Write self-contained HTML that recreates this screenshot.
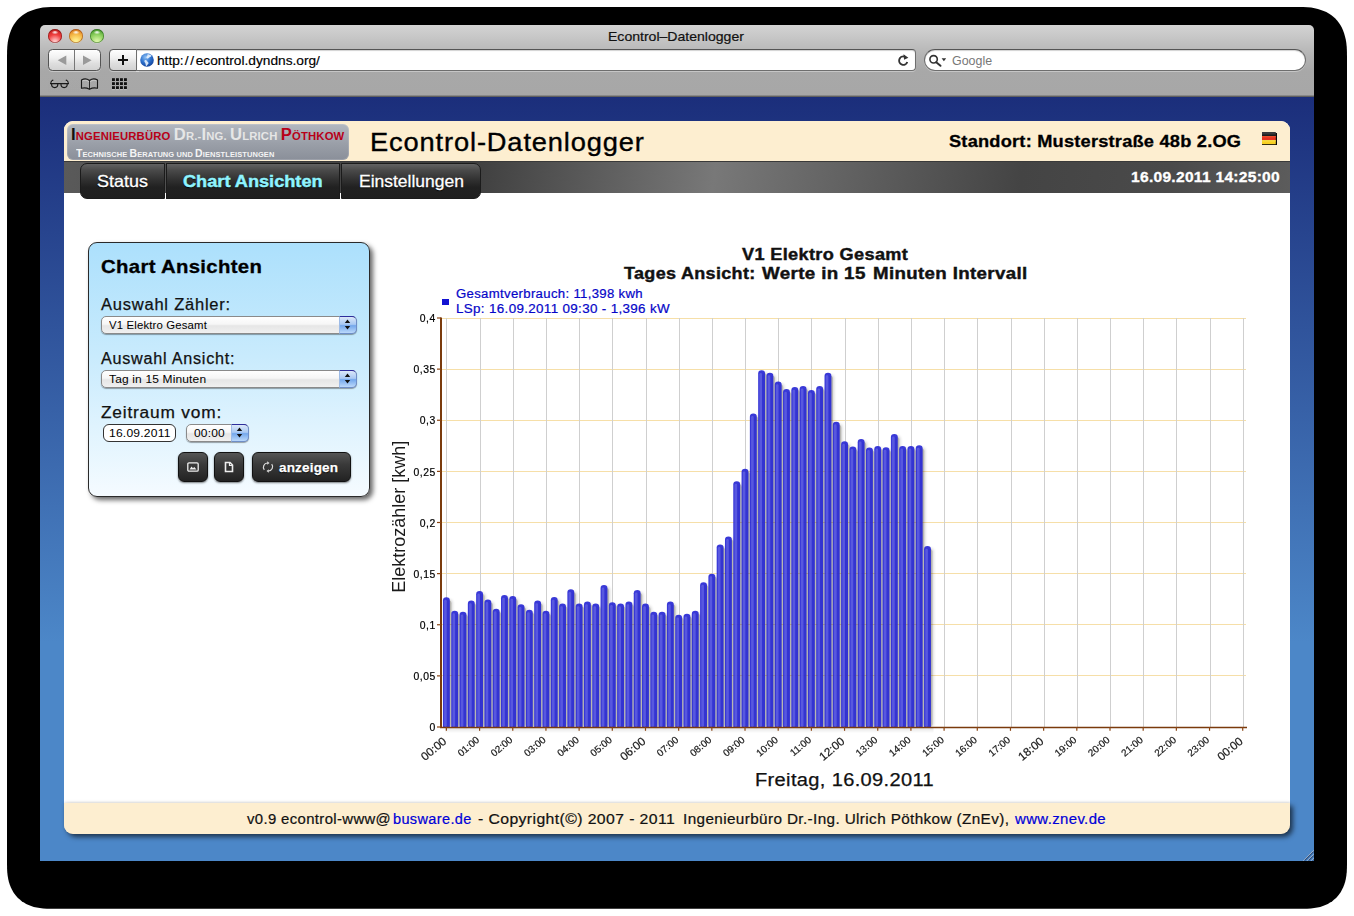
<!DOCTYPE html>
<html lang="de">
<head>
<meta charset="utf-8">
<title>Econtrol-Datenlogger</title>
<style>
*{box-sizing:border-box;margin:0;padding:0}
html,body{width:1354px;height:916px;overflow:hidden;background:#fff}
body{position:relative;font-family:"Liberation Sans",sans-serif;color:#000}
.abs{position:absolute}
.t{position:absolute;white-space:nowrap;line-height:1}
#shadow{left:7px;top:6px;width:1340px;height:903px;background:#000;border-radius:47px}
#win{left:40px;top:25px;width:1274px;height:836px;overflow:hidden;border-radius:5px 5px 0 0}
#chrome{left:0;top:0;width:1274px;height:72px;background:linear-gradient(#d3d3d3 0px,#c9c9c9 10px,#b4b4b4 30px,#a8a8a8 46px,#a7a7a7 70px,#6a6a6a 71px,#555 72px)}
#page{left:0;top:72px;width:1274px;height:764px;background:linear-gradient(#1b2e7b 0px,#4c87c8 545px,#4c87c8 100%)}
.tl{position:absolute;top:29px;width:14px;height:14px;border-radius:50%}
.tl:after{content:"";position:absolute;left:4.200px;top:1.600px;width:5.600px;height:3.200px;border-radius:50%;background:radial-gradient(ellipse at 50% 40%,rgba(255,255,255,.95) 0%,rgba(255,255,255,.5) 45%,rgba(255,255,255,0) 100%)}
.btn{position:absolute;top:49px;height:22px;border:1px solid #545454;border-radius:4.5px;background:linear-gradient(#fefefe,#f1f1f1 38%,#dedede 68%,#d2d2d2);box-shadow:0 1px 0 rgba(255,255,255,.35)}
.field{position:absolute;top:49px;height:22px;background:#fff;border:1px solid #6e6e6e;border-top-color:#555;box-shadow:0 1px 0 rgba(255,255,255,.35), inset 0 1px 1px rgba(0,0,0,.18)}
</style>
</head>
<body>
<svg class="abs" style="left:0;top:0" width="1354" height="916"><path d="M7.0 56.9 L7.1 50.8 L7.3 46.5 L7.7 42.7 L8.3 39.2 L9.1 36.0 L10.0 33.0 L11.0 30.2 L12.2 27.6 L13.6 25.1 L15.2 22.8 L16.9 20.6 L18.7 18.6 L20.7 16.8 L22.9 15.1 L25.2 13.5 L27.7 12.1 L30.3 10.9 L33.1 9.9 L36.1 9.0 L39.3 8.2 L42.8 7.6 L46.6 7.2 L50.9 7.0 L57.0 6.9 L1297.0 6.9 L1303.1 7.0 L1307.4 7.2 L1311.2 7.6 L1314.7 8.2 L1317.9 9.0 L1320.9 9.9 L1323.7 10.9 L1326.3 12.1 L1328.8 13.5 L1331.1 15.1 L1333.3 16.8 L1335.3 18.6 L1337.1 20.6 L1338.8 22.8 L1340.4 25.1 L1341.8 27.6 L1343.0 30.2 L1344.0 33.0 L1344.9 36.0 L1345.7 39.2 L1346.3 42.7 L1346.7 46.5 L1346.9 50.8 L1347.0 56.9 L1347.0 863.8 L1346.9 868.9 L1346.7 872.6 L1346.3 876.0 L1345.8 879.1 L1345.1 882.0 L1344.2 884.7 L1343.2 887.2 L1342.1 889.6 L1340.8 891.9 L1339.4 894.1 L1337.8 896.0 L1336.1 897.9 L1334.2 899.6 L1332.3 901.2 L1330.1 902.6 L1327.8 903.9 L1325.4 905.0 L1322.9 906.0 L1320.2 906.9 L1317.3 907.6 L1314.2 908.1 L1310.8 908.5 L1307.1 908.7 L1302.0 908.8 L52.0 908.8 L46.9 908.7 L43.2 908.5 L39.8 908.1 L36.7 907.6 L33.8 906.9 L31.1 906.0 L28.6 905.0 L26.2 903.9 L23.9 902.6 L21.7 901.2 L19.8 899.6 L17.9 897.9 L16.2 896.0 L14.6 894.1 L13.2 891.9 L11.9 889.6 L10.8 887.2 L9.8 884.7 L8.9 882.0 L8.2 879.1 L7.7 876.0 L7.3 872.6 L7.1 868.9 L7.0 863.8z" fill="#000"/></svg>
<div id="win" class="abs">
<div id="chrome" class="abs">
<div class="abs" style="left:-40px;top:-25px;width:1354px;height:916px">
  <div class="tl" style="left:48px;background:radial-gradient(circle at 50% 92%,#ffd0d0 0%,#ffb4b4 14%,#ef4040 50%,#d42a2a 72%,#8e1616 100%);box-shadow:inset 0 0 0 .8px rgba(110,15,15,.65),0 .5px 0 rgba(255,255,255,.35)"></div>
  <div class="tl" style="left:69px;background:radial-gradient(circle at 50% 92%,#fff39a 0%,#ffea86 16%,#f6bd4c 50%,#e8952e 72%,#a8461a 100%);box-shadow:inset 0 0 0 .8px rgba(140,60,10,.6),0 .5px 0 rgba(255,255,255,.35)"></div>
  <div class="tl" style="left:90px;background:radial-gradient(circle at 50% 92%,#dcf7aa 0%,#cdf09a 16%,#8fd160 50%,#63b040 72%,#2a6e1a 100%);box-shadow:inset 0 0 0 .8px rgba(30,90,20,.6),0 .5px 0 rgba(255,255,255,.35)"></div>
  <div class="t" id="wtitle" style="-webkit-text-stroke-width:.2px;left:608.4px;transform-origin:0 0;transform:scaleX(1.0807);top:30px;font-size:13px;color:#111">Econtrol–Datenlogger</div>
  <div class="btn" style="left:48px;width:53px"></div>
  <div class="abs" style="left:74px;top:50px;width:1px;height:20px;background:#777"></div>
  <svg class="abs" style="left:48px;top:49px" width="53" height="22"><path d="M18.300 6.500v9.400l-8.600-4.700z" fill="#9a9a9a"/><path d="M35 6.500v9.400l8.600-4.700z" fill="#9a9a9a"/></svg>
  <div class="btn" style="left:109px;width:30px;border-radius:4px 0 0 4px"></div>
  <svg class="abs" style="left:109px;top:49px" width="30" height="22"><path d="M9 11h10M14 6v10" stroke="#111" stroke-width="2" fill="none"/></svg>
  <div class="field" id="urlf" style="left:136px;width:780px;border-radius:0 4px 4px 0"></div>
  <svg class="abs" style="left:140px;top:53px" width="14" height="14" viewBox="0 0 14 14"><defs><radialGradient id="gl" cx=".4" cy=".3" r=".75"><stop offset="0" stop-color="#8fc0f4"/><stop offset=".5" stop-color="#2f74d0"/><stop offset="1" stop-color="#123f96"/></radialGradient></defs><circle cx="7" cy="7" r="6.800" fill="url(#gl)"/><path d="M7.500 1.200c1.800-.2 3.300.6 4.200 1.800c-.8.300-1.200 1.100-2 1.300c-.9.200-1.100 1.200-1.900 1.300c-.9.100-1.600-.6-1.500-1.500c.1-.8 1-.9 1.100-1.700c.1-.5-.1-.9.100-1.200zM4.800 7.200c.9-.3 1.900.2 2.400 1c.5.800 1.500 1 1.300 2c-.2 1-1.200 1.300-1.500 2.200c-.2.500-.6.700-1 .4c-.5-1-.3-2.100-.9-3c-.5-.8-1.300-1.800-.3-2.600z" fill="#e8f2fd" opacity=".9"/></svg>
  <div class="t" id="url" style="-webkit-text-stroke-width:.15px;left:157.4px;transform-origin:0 0;transform:scaleX(1.0542);top:54px;font-size:13px;color:#000">http:<span style="letter-spacing:1.6px;margin-left:1px">//</span>econtrol.dyndns.org/</div>
  <svg class="abs" style="left:48px;top:76px" width="84" height="16" viewBox="48 76 84 16">
    <g fill="none" stroke="#ddd" stroke-width="1.1" opacity=".55" transform="translate(0,1)">
      <path d="M50.6 84.200q0.300-3.200 2.400-3.800M68.500 84.200q-.3-3.200-2.400-3.800"/>
      <path d="M81.500 88.500v-8.200q4-2.500 8 0.500q4-3 8-0.500v8.200"/>
    </g>
    <g fill="none" stroke="#1a1a1a" stroke-width="1.15" stroke-linecap="round">
      <path d="M50.6 83.700q0.300-3 2.300-3.600M68.500 83.700q-.3-3-2.300-3.600"/>
      <path d="M50.800 83.600h17.500" stroke-width="1.4"/>
      <path d="M51.600 84q-.2 3.600 3.100 3.600q3.300 0 3.100-3.600M61 84q-.2 3.600 3.100 3.600q3.300 0 3.100-3.600"/>
      <path d="M81.500 88.300v-8.200q4-2.600 8 .4q4-3 8-.4v8.200q-4-1.300-8 .9q-4-2.200-8-.9z" stroke-linejoin="round"/>
      <path d="M89.500 80.600v8.300" stroke-width=".9"/>
    </g>
    <g fill="#111">
      <rect x="112" y="78.200" width="2.900" height="2.800"/><rect x="116" y="78.200" width="2.900" height="2.800"/><rect x="120" y="78.200" width="2.900" height="2.800"/><rect x="124" y="78.200" width="2.900" height="2.800"/>
      <rect x="112" y="82.200" width="2.900" height="2.800"/><rect x="116" y="82.200" width="2.900" height="2.800"/><rect x="120" y="82.200" width="2.900" height="2.800"/><rect x="124" y="82.200" width="2.900" height="2.800"/>
      <rect x="112" y="86.200" width="2.900" height="2.800"/><rect x="116" y="86.200" width="2.900" height="2.800"/><rect x="120" y="86.200" width="2.900" height="2.800"/><rect x="124" y="86.200" width="2.900" height="2.800"/>
    </g>
    <g fill="#d8d8d8" opacity=".6">
      <rect x="112" y="89.300" width="2.900" height=".8"/><rect x="116" y="89.300" width="2.900" height=".8"/><rect x="120" y="89.300" width="2.900" height=".8"/><rect x="124" y="89.300" width="2.900" height=".8"/>
    </g>
  </svg>
  <div class="field" id="srch" style="left:924px;width:382px;border-radius:11px"></div>
  <svg class="abs" style="left:896px;top:52px" width="52" height="16" viewBox="896 52 52 16">
    <path d="M907.300 62a4.200 4.200 0 1 1 -2.700 -5.400" fill="none" stroke="#333" stroke-width="1.900"/>
    <path d="M903.500 54.300l4.900 3.400l-4.300 2z" fill="#333"/>
    <circle cx="933.600" cy="59.300" r="3.700" fill="none" stroke="#333" stroke-width="1.600"/>
    <path d="M936.200 62.200l4.300 3.600" stroke="#333" stroke-width="2" stroke-linecap="round"/>
    <path d="M941.600 58.200h4.600l-2.300 3z" fill="#333"/>
  </svg>
  <div class="t" id="goog" style="left:952.4px;transform-origin:0 0;transform:scaleX(1.0361);top:54.5px;font-size:12px;color:#777">Google</div>
</div>
</div>
<div id="page" class="abs">
<div class="abs" id="cv" style="left:-40px;top:-97px;width:1354px;height:916px">
<style>
#panel{left:64px;top:121px;width:1226px;height:712.7px;background:#fff;border-radius:9px}
#hdr{left:64px;top:120.8px;width:1226px;height:41px;background:#fdeed0;border-radius:9px 9px 0 0}
#nav{left:64px;top:160.6px;width:1226px;height:32.2px;border-top:1px solid #3a3a3a;background:linear-gradient(98deg,#5a5a5a 0%,#4a4a4a 14%,#3e3e3e 33%,#787878 53%,#444 78%,#4a4a4a 90%,#5c5c5c 100%)}
#ftr{left:64px;top:802.5px;width:1226px;height:31.2px;background:#fdeed0;border-radius:0 0 9px 9px;box-shadow:3px 3px 5px rgba(0,0,0,.6),0 -1px 3px rgba(0,0,0,.10)}
#logo{left:67px;top:124px;width:282px;height:36px;border-radius:6px;background:linear-gradient(#b3b8c0,#9a9fa8 55%,#8a8f99);box-shadow:inset 0 0 0 1px rgba(255,255,255,.15)}
.sc{font-weight:bold;font-size:10.9px;letter-spacing:.15px}
.sc b{font-size:16px;font-weight:bold}
.sc2{font-weight:bold;font-size:7.5px;color:#f4f4f4;letter-spacing:.1px}
.sc2 b{font-size:10.5px}
.tab{position:absolute;top:163px;height:35.6px;border:1px solid #1b1b1b;background:linear-gradient(#626262 0%,#4a4a4a 18%,#303030 48%,#212121 68%,#1f1f1f 100%)}
.tabt{-webkit-text-stroke-width:.3px;top:172.5px;font-size:16.5px;color:#fff;text-shadow:0 1px 1px #000}
</style>
<div id="panel" class="abs"></div>
<div id="hdr" class="abs"></div>
<div id="logo" class="abs"></div>
<div class="t sc" id="lg1" style="left:71.2px;transform-origin:0 0;transform:scaleX(1.0367);top:126.5px;color:#b80018"><b style="color:#111">I</b>NGENIEURBÜRO <span style="color:#e6e6e6"><b>D</b>R.-<b>I</b>NG. <b>U</b>LRICH</span> <b>P</b>ÖTHKOW</div>
<div class="t sc2" id="lg2" style="left:76.0px;transform-origin:0 0;transform:scaleX(0.9957);top:148px"><b>T</b>ECHNISCHE <b>B</b>ERATUNG UND <b>D</b>IENSTLEISTUNGEN</div>
<div class="t" id="ttl" style="-webkit-text-stroke-width:.35px;left:370.0px;transform-origin:0 0;transform:scaleX(1.0818);top:129.6px;font-size:25.2px;letter-spacing:.8px">Econtrol-Datenlogger</div>
<div class="t" id="loc" style="-webkit-text-stroke-width:.3px;left:949.0px;transform-origin:0 0;transform:scaleX(1.0605);top:133.1px;font-size:17.2px;font-weight:bold;letter-spacing:.2px">Standort: Musterstraße 48b 2.OG</div>
<svg class="abs" style="left:1262px;top:131.800px" width="15" height="13.200" viewBox="0 0 15 13.200"><rect x="0" y="1" width="15" height="12.200" fill="#0a0a0a"/><rect x="0" y="0" width="13.800" height="4.100" fill="#3a3a3a"/><rect x="0" y="2.500" width="13.800" height="1.600" fill="#1c1c1c"/><rect x="0" y="4.100" width="13.800" height="4.100" fill="#e4301e"/><rect x="0" y="4.100" width="13.800" height="1.200" fill="#f0502c"/><rect x="0" y="8.200" width="13.800" height="4" fill="#f7cf22"/><rect x="0" y="8.200" width="13.800" height="1.200" fill="#fbe04a"/></svg>
<div id="nav" class="abs"></div>
<div class="t" id="dt" style="-webkit-text-stroke-width:.3px;left:1131.0px;transform-origin:0 0;transform:scaleX(1.0683);top:170px;font-size:14.6px;font-weight:bold;color:#fff;letter-spacing:.25px">16.09.2011 14:25:00</div>
<div class="tab" style="left:80.4px;width:84.6px;border-radius:7px 0 0 7px"></div><div class="t tabt" id="tab1" style="left:97.4px;transform-origin:0 0;transform:scaleX(1.0880);">Status</div>
<div class="tab" style="left:166px;width:174px"></div><div class="t tabt" id="tab2" style="left:183.4px;transform-origin:0 0;transform:scaleX(1.1007);color:#8ff4ff;font-weight:bold;-webkit-text-stroke-width:.45px">Chart Ansichten</div>
<div class="tab" style="left:341px;width:140px;border-radius:0 7px 7px 0"></div><div class="t tabt" id="tab3" style="left:359.0px;transform-origin:0 0;transform:scaleX(1.0588);">Einstellungen</div>
<div id="ftr" class="abs"></div>
<div class="t" id="fta" style="left:247.3px;transform-origin:0 0;transform:scaleX(1.0621);-webkit-text-stroke-width:.2px;top:811.5px;font-size:14px;letter-spacing:.35px;color:#111;">v0.9 econtrol-www@</div>
<div class="t" id="ftb" style="left:392.9px;transform-origin:0 0;transform:scaleX(1.0370);-webkit-text-stroke-width:.2px;top:811.5px;font-size:14px;letter-spacing:.35px;color:#111;color:#0000d8;">busware.de</div>
<div class="t" id="ftc" style="left:477.6px;transform-origin:0 0;transform:scaleX(1.1276);-webkit-text-stroke-width:.2px;top:811.5px;font-size:14px;letter-spacing:.35px;color:#111;">- Copyright(©) 2007 - 2011</div>
<div class="t" id="ftd" style="left:682.7px;transform-origin:0 0;transform:scaleX(1.0914);-webkit-text-stroke-width:.2px;top:811.5px;font-size:14px;letter-spacing:.35px;color:#111;">Ingenieurbüro Dr.-Ing. Ulrich Pöthkow (ZnEv),</div>
<div class="t" id="fte" style="left:1015.0px;transform-origin:0 0;transform:scaleX(1.0669);-webkit-text-stroke-width:.2px;top:811.5px;font-size:14px;letter-spacing:.35px;color:#111;color:#0000d8;">www.znev.de</div>
<svg class="abs" style="left:1302px;top:849px" width="12" height="12" viewBox="0 0 12 12"><g stroke="#b9c9de" stroke-width="1"><path d="M11.500 1.500l-10 10M11.500 5.500l-6 6M11.500 9.500l-2 2"/></g><g stroke="#2f4f7c" stroke-width="1.1"><path d="M11.500 2.600l-8.900 8.900M11.500 6.600l-4.900 4.900M11.500 10.600l-.9.900"/></g></svg>
<style>
#side{left:88px;top:242px;width:282px;height:255px;border:1px solid #2a2a2a;border-radius:9px;background:linear-gradient(#ace0fc 0%,#c9ebfd 45%,#f5fbff 100%);box-shadow:3px 3px 5px rgba(0,0,0,.6)}
.lbl{-webkit-text-stroke-width:.25px;font-size:16px;letter-spacing:.75px;color:#111}
.sel{position:absolute;height:17.8px;border:1px solid #8a8a8a;border-radius:5px;background:linear-gradient(#ffffff 0%,#f6f6f6 45%,#e6e6e6 55%,#f0f0f0 100%);box-shadow:0 1px 1px rgba(0,0,0,.35)}
.selcap{position:absolute;top:-1px;right:-1px;width:18px;height:17.8px;border-radius:0 5px 5px 0;border:1px solid #6f8fc8;border-top-color:#2d2d9c;border-left-color:#9dbbe6;background:linear-gradient(#dbe8f9 0%,#a9c9f3 46%,#74a8ec 54%,#bcd9fb 100%)}
.seltx{font-size:11px;color:#000;letter-spacing:.15px}
.dbtn{position:absolute;top:452px;height:30px;border-radius:6px;border:1px solid #111;background:linear-gradient(#555 0%,#3a3a3a 40%,#222 100%);box-shadow:0 1px 2px rgba(0,0,0,.5)}
</style>
<div id="side" class="abs"></div>
<div class="t" id="sh" style="-webkit-text-stroke-width:.3px;left:101.0px;transform-origin:0 0;transform:scaleX(1.0708);top:257px;font-size:19px;font-weight:bold;letter-spacing:.3px">Chart Ansichten</div>
<div class="t lbl" id="l1" style="left:101.0px;transform-origin:0 0;transform:scaleX(1.0312);top:297px">Auswahl Zähler:</div>
<div class="sel" style="left:101px;top:316.3px;width:256px"><div class="selcap"><svg width="15" height="15" style="position:absolute;left:0;top:0"><path d="M7.5 2.5l2.7 3.6h-5.4zM7.5 12.5l2.7-3.6h-5.4z" fill="#111"/></svg></div></div>
<div class="t lbl" id="l2" style="left:101.0px;transform-origin:0 0;transform:scaleX(1.0101);top:351px">Auswahl Ansicht:</div>
<div class="sel" style="left:101px;top:370.3px;width:256px"><div class="selcap"><svg width="15" height="15" style="position:absolute;left:0;top:0"><path d="M7.5 2.5l2.7 3.6h-5.4zM7.5 12.5l2.7-3.6h-5.4z" fill="#111"/></svg></div></div>
<div class="t lbl" id="l3" style="left:101.0px;transform-origin:0 0;transform:scaleX(1.0804);top:405px">Zeitraum vom:</div>
<div class="abs" style="left:103px;top:424.3px;width:73px;height:17.5px;border:1px solid #333;border-radius:6px;background:#fff"></div>
<div class="t" id="d1" style="left:109.0px;transform-origin:0 0;transform:scaleX(1.0969);top:428px;font-size:11px;letter-spacing:.2px">16.09.2011</div>
<div class="sel" style="left:186px;top:424.3px;width:63px"><div class="selcap"><svg width="15" height="15" style="position:absolute;left:0;top:0"><path d="M7.5 2.5l2.7 3.6h-5.4zM7.5 12.5l2.7-3.6h-5.4z" fill="#111"/></svg></div></div>
<div class="dbtn" style="left:178px;width:30px"></div>
<svg class="abs" style="left:187px;top:462px" width="12" height="10"><rect x="0.800" y="0.800" width="10.400" height="8.400" rx="1.2" fill="none" stroke="#eee" stroke-width="1.300"/><path d="M2.500 7.500l2-3 1.500 1.800 1.200-1.200 2.300 2.400z" fill="#eee"/></svg>
<div class="dbtn" style="left:214px;width:30px"></div>
<svg class="abs" style="left:224px;top:461px" width="10" height="12"><path d="M1.5 1.5h4.5l2.5 2.5v6.500h-7z" fill="none" stroke="#eee" stroke-width="1.6"/><path d="M5.5 1.500v3h3" fill="none" stroke="#eee" stroke-width="1.2"/></svg>
<div class="dbtn" style="left:252px;width:99px"></div>
<svg class="abs" style="left:261px;top:459px" width="14" height="16" viewBox="0 0 14 16"><g fill="none" stroke="#ddd" stroke-width="1.200"><path d="M3.300 10.800a4.200 4.200 0 0 1 3.200-6.800"/><path d="M10.700 5.200a4.200 4.200 0 0 1 -3.200 6.800"/></g><path d="M6.200 2.200l2.300 1.800-2.300 1.800z" fill="#ddd"/><path d="M7.800 10.200l-2.300 1.800 2.300 1.800z" fill="#ddd"/></svg>
<div class="t" id="az" style="-webkit-text-stroke-width:.25px;left:279.0px;transform-origin:0 0;transform:scaleX(0.9971);top:460.5px;font-size:13.5px;font-weight:bold;color:#fff;letter-spacing:.2px;text-shadow:0 1px 1px #000">anzeigen</div>
<div class="t seltx" id="s1" style="left:109.0px;transform-origin:0 0;transform:scaleX(1.0329);top:320px">V1 Elektro Gesamt</div>
<div class="t seltx" id="s2" style="left:109.0px;transform-origin:0 0;transform:scaleX(1.0874);top:374px">Tag in 15 Minuten</div>
<div class="t seltx" id="s3" style="left:194.4px;transform-origin:0 0;transform:scaleX(1.0891);top:428px">00:00</div>
<style>
.yl{-webkit-text-stroke-width:.2px;font-size:10.4px;letter-spacing:.5px;text-align:right;color:#000}
.xl{will-change:transform;text-align:right;transform-origin:100% 0;transform:rotate(-40deg);color:#2a2a2a}
.ct{-webkit-text-stroke-width:.4px;font-size:15.8px;font-weight:bold;letter-spacing:.3px;color:#111}
.lg{-webkit-text-stroke-width:.2px;font-size:12px;color:#0606c8;letter-spacing:.3px}
</style>
<div class="t ct" id="ct1" style="left:742.2px;transform-origin:0 0;transform:scaleX(1.1484);top:246.7px">V1 Elektro Gesamt</div>
<div class="t ct" id="ct2a" style="left:623.9px;transform-origin:0 0;transform:scaleX(1.1375);top:265.9px">Tages Ansicht:</div>
<div class="t ct" id="ct2b" style="left:762.2px;transform-origin:0 0;transform:scaleX(1.1879);top:265.9px">Werte in 15</div>
<div class="t ct" id="ct2c" style="left:872.5px;transform-origin:0 0;transform:scaleX(1.1828);top:265.9px">Minuten Intervall</div>
<div class="abs" style="left:442.4px;top:298.6px;width:6.4px;height:6.4px;background:#1212d2"></div>
<div class="t lg" id="lg_1" style="left:456.0px;transform-origin:0 0;transform:scaleX(1.0959);top:288px">Gesamtverbrauch: 11,398 kwh</div>
<div class="t lg" id="lg_2" style="left:456.0px;transform-origin:0 0;transform:scaleX(1.1174);top:303px">LSp: 16.09.2011 09:30 - 1,396 kW</div>
<svg class="abs" style="will-change:transform;left:385px;top:430px" width="30" height="175" viewBox="385 430 30 175"><text font-family="Liberation Sans, sans-serif" font-size="18" fill="#1a1a1a" text-anchor="middle" transform="translate(405.200 516.700) rotate(-90)">Elektrozähler [kwh]</text></svg>
<div class="t" id="xax" style="-webkit-text-stroke-width:.25px;left:755.0px;transform-origin:0 0;transform:scaleX(1.1461);top:772px;font-size:17.5px;letter-spacing:.3px;color:#111">Freitag, 16.09.2011</div>
<svg class="abs" id="chart" style="left:380px;top:230px" width="900" height="570" viewBox="380 230 900 570">
<defs><linearGradient id="bg" x1="0" x2="1" y1="0" y2="0"><stop offset="0" stop-color="#1c1cc4"/><stop offset=".3" stop-color="#4a4ae0"/><stop offset=".6" stop-color="#3030d2"/><stop offset="1" stop-color="#1a1abf"/></linearGradient><linearGradient id="ux" x1="0" x2="0" y1="0" y2="1"><stop offset="0" stop-color="#000" stop-opacity=".10"/><stop offset="1" stop-color="#000" stop-opacity="0"/></linearGradient><filter id="sb" x="-5%" y="-5%" width="110%" height="110%"><feGaussianBlur stdDeviation="1.5"/></filter></defs>
<line x1="441" x2="1246" y1="675.50" y2="675.50" stroke="#f6dfa8" stroke-width="1"/>
<line x1="441" x2="1246" y1="624.50" y2="624.50" stroke="#f6dfa8" stroke-width="1"/>
<line x1="441" x2="1246" y1="573.50" y2="573.50" stroke="#f6dfa8" stroke-width="1"/>
<line x1="441" x2="1246" y1="522.50" y2="522.50" stroke="#f6dfa8" stroke-width="1"/>
<line x1="441" x2="1246" y1="471.50" y2="471.50" stroke="#f6dfa8" stroke-width="1"/>
<line x1="441" x2="1246" y1="420.50" y2="420.50" stroke="#f6dfa8" stroke-width="1"/>
<line x1="441" x2="1246" y1="369.50" y2="369.50" stroke="#f6dfa8" stroke-width="1"/>
<line x1="441" x2="1246" y1="318.50" y2="318.50" stroke="#f6dfa8" stroke-width="1"/>
<line x1="446.50" x2="446.50" y1="318.0" y2="727.0" stroke="#cfcfcf" stroke-width="1"/>
<line x1="480.50" x2="480.50" y1="318.0" y2="727.0" stroke="#cfcfcf" stroke-width="1"/>
<line x1="513.50" x2="513.50" y1="318.0" y2="727.0" stroke="#cfcfcf" stroke-width="1"/>
<line x1="546.50" x2="546.50" y1="318.0" y2="727.0" stroke="#cfcfcf" stroke-width="1"/>
<line x1="579.50" x2="579.50" y1="318.0" y2="727.0" stroke="#cfcfcf" stroke-width="1"/>
<line x1="612.50" x2="612.50" y1="318.0" y2="727.0" stroke="#cfcfcf" stroke-width="1"/>
<line x1="646.50" x2="646.50" y1="318.0" y2="727.0" stroke="#cfcfcf" stroke-width="1"/>
<line x1="679.50" x2="679.50" y1="318.0" y2="727.0" stroke="#cfcfcf" stroke-width="1"/>
<line x1="712.50" x2="712.50" y1="318.0" y2="727.0" stroke="#cfcfcf" stroke-width="1"/>
<line x1="745.50" x2="745.50" y1="318.0" y2="727.0" stroke="#cfcfcf" stroke-width="1"/>
<line x1="778.50" x2="778.50" y1="318.0" y2="727.0" stroke="#cfcfcf" stroke-width="1"/>
<line x1="811.50" x2="811.50" y1="318.0" y2="727.0" stroke="#cfcfcf" stroke-width="1"/>
<line x1="845.50" x2="845.50" y1="318.0" y2="727.0" stroke="#cfcfcf" stroke-width="1"/>
<line x1="878.50" x2="878.50" y1="318.0" y2="727.0" stroke="#cfcfcf" stroke-width="1"/>
<line x1="911.50" x2="911.50" y1="318.0" y2="727.0" stroke="#cfcfcf" stroke-width="1"/>
<line x1="944.50" x2="944.50" y1="318.0" y2="727.0" stroke="#cfcfcf" stroke-width="1"/>
<line x1="977.50" x2="977.50" y1="318.0" y2="727.0" stroke="#cfcfcf" stroke-width="1"/>
<line x1="1011.50" x2="1011.50" y1="318.0" y2="727.0" stroke="#cfcfcf" stroke-width="1"/>
<line x1="1044.50" x2="1044.50" y1="318.0" y2="727.0" stroke="#cfcfcf" stroke-width="1"/>
<line x1="1077.50" x2="1077.50" y1="318.0" y2="727.0" stroke="#cfcfcf" stroke-width="1"/>
<line x1="1110.50" x2="1110.50" y1="318.0" y2="727.0" stroke="#cfcfcf" stroke-width="1"/>
<line x1="1143.50" x2="1143.50" y1="318.0" y2="727.0" stroke="#cfcfcf" stroke-width="1"/>
<line x1="1176.50" x2="1176.50" y1="318.0" y2="727.0" stroke="#cfcfcf" stroke-width="1"/>
<line x1="1210.50" x2="1210.50" y1="318.0" y2="727.0" stroke="#cfcfcf" stroke-width="1"/>
<line x1="1243.50" x2="1243.50" y1="318.0" y2="727.0" stroke="#cfcfcf" stroke-width="1"/>
<g fill="#3c3820" opacity=".2">
<rect x="444.55" y="600.20" width="6.90" height="126.80" rx="3"/>
<rect x="452.85" y="613.70" width="6.90" height="113.30" rx="3"/>
<rect x="461.14" y="614.80" width="6.90" height="112.20" rx="3"/>
<rect x="469.44" y="603.60" width="6.90" height="123.40" rx="3"/>
<rect x="477.73" y="594.00" width="6.90" height="133.00" rx="3"/>
<rect x="486.03" y="602.50" width="6.90" height="124.50" rx="3"/>
<rect x="494.32" y="611.70" width="6.90" height="115.30" rx="3"/>
<rect x="502.62" y="598.10" width="6.90" height="128.90" rx="3"/>
<rect x="510.91" y="599.10" width="6.90" height="127.90" rx="3"/>
<rect x="519.20" y="607.30" width="6.90" height="119.70" rx="3"/>
<rect x="527.50" y="612.70" width="6.90" height="114.30" rx="3"/>
<rect x="535.79" y="603.60" width="6.90" height="123.40" rx="3"/>
<rect x="544.09" y="613.70" width="6.90" height="113.30" rx="3"/>
<rect x="552.38" y="600.10" width="6.90" height="126.90" rx="3"/>
<rect x="560.68" y="606.60" width="6.90" height="120.40" rx="3"/>
<rect x="568.97" y="592.30" width="6.90" height="134.70" rx="3"/>
<rect x="577.27" y="606.60" width="6.90" height="120.40" rx="3"/>
<rect x="585.56" y="604.60" width="6.90" height="122.40" rx="3"/>
<rect x="593.86" y="606.60" width="6.90" height="120.40" rx="3"/>
<rect x="602.15" y="587.90" width="6.90" height="139.10" rx="3"/>
<rect x="610.45" y="605.30" width="6.90" height="121.70" rx="3"/>
<rect x="618.75" y="606.60" width="6.90" height="120.40" rx="3"/>
<rect x="627.04" y="604.60" width="6.90" height="122.40" rx="3"/>
<rect x="635.33" y="593.00" width="6.90" height="134.00" rx="3"/>
<rect x="643.63" y="606.60" width="6.90" height="120.40" rx="3"/>
<rect x="651.92" y="614.80" width="6.90" height="112.20" rx="3"/>
<rect x="660.22" y="614.80" width="6.90" height="112.20" rx="3"/>
<rect x="668.51" y="604.60" width="6.90" height="122.40" rx="3"/>
<rect x="676.81" y="617.80" width="6.90" height="109.20" rx="3"/>
<rect x="685.10" y="616.80" width="6.90" height="110.20" rx="3"/>
<rect x="693.40" y="613.70" width="6.90" height="113.30" rx="3"/>
<rect x="701.69" y="585.20" width="6.90" height="141.80" rx="3"/>
<rect x="709.99" y="576.70" width="6.90" height="150.30" rx="3"/>
<rect x="718.28" y="547.40" width="6.90" height="179.60" rx="3"/>
<rect x="726.58" y="539.50" width="6.90" height="187.50" rx="3"/>
<rect x="734.87" y="484.20" width="6.90" height="242.80" rx="3"/>
<rect x="743.17" y="471.80" width="6.90" height="255.20" rx="3"/>
<rect x="751.47" y="416.50" width="6.90" height="310.50" rx="3"/>
<rect x="759.76" y="373.30" width="6.90" height="353.70" rx="3"/>
<rect x="768.05" y="375.70" width="6.90" height="351.30" rx="3"/>
<rect x="776.35" y="384.60" width="6.90" height="342.40" rx="3"/>
<rect x="784.64" y="392.10" width="6.90" height="334.90" rx="3"/>
<rect x="792.94" y="390.10" width="6.90" height="336.90" rx="3"/>
<rect x="801.24" y="388.90" width="6.90" height="338.10" rx="3"/>
<rect x="809.53" y="393.00" width="6.90" height="334.00" rx="3"/>
<rect x="817.82" y="388.90" width="6.90" height="338.10" rx="3"/>
<rect x="826.12" y="375.70" width="6.90" height="351.30" rx="3"/>
<rect x="834.41" y="424.70" width="6.90" height="302.30" rx="3"/>
<rect x="842.71" y="444.20" width="6.90" height="282.80" rx="3"/>
<rect x="851.00" y="449.40" width="6.90" height="277.60" rx="3"/>
<rect x="859.30" y="442.00" width="6.90" height="285.00" rx="3"/>
<rect x="867.59" y="450.40" width="6.90" height="276.60" rx="3"/>
<rect x="875.89" y="449.00" width="6.90" height="278.00" rx="3"/>
<rect x="884.18" y="450.20" width="6.90" height="276.80" rx="3"/>
<rect x="892.48" y="436.90" width="6.90" height="290.10" rx="3"/>
<rect x="900.77" y="449.00" width="6.90" height="278.00" rx="3"/>
<rect x="909.07" y="449.00" width="6.90" height="278.00" rx="3"/>
<rect x="917.36" y="448.20" width="6.90" height="278.80" rx="3"/>
<rect x="925.66" y="549.10" width="6.90" height="177.90" rx="3"/>
</g>
<g fill="#000" opacity=".17" filter="url(#sb)">
<rect x="445.55" y="599.40" width="6.90" height="127.60" rx="3"/>
<rect x="453.85" y="612.90" width="6.90" height="114.10" rx="3"/>
<rect x="462.14" y="614.00" width="6.90" height="113.00" rx="3"/>
<rect x="470.44" y="602.80" width="6.90" height="124.20" rx="3"/>
<rect x="478.73" y="593.20" width="6.90" height="133.80" rx="3"/>
<rect x="487.03" y="601.70" width="6.90" height="125.30" rx="3"/>
<rect x="495.32" y="610.90" width="6.90" height="116.10" rx="3"/>
<rect x="503.62" y="597.30" width="6.90" height="129.70" rx="3"/>
<rect x="511.91" y="598.30" width="6.90" height="128.70" rx="3"/>
<rect x="520.20" y="606.50" width="6.90" height="120.50" rx="3"/>
<rect x="528.50" y="611.90" width="6.90" height="115.10" rx="3"/>
<rect x="536.79" y="602.80" width="6.90" height="124.20" rx="3"/>
<rect x="545.09" y="612.90" width="6.90" height="114.10" rx="3"/>
<rect x="553.38" y="599.30" width="6.90" height="127.70" rx="3"/>
<rect x="561.68" y="605.80" width="6.90" height="121.20" rx="3"/>
<rect x="569.97" y="591.50" width="6.90" height="135.50" rx="3"/>
<rect x="578.27" y="605.80" width="6.90" height="121.20" rx="3"/>
<rect x="586.56" y="603.80" width="6.90" height="123.20" rx="3"/>
<rect x="594.86" y="605.80" width="6.90" height="121.20" rx="3"/>
<rect x="603.15" y="587.10" width="6.90" height="139.90" rx="3"/>
<rect x="611.45" y="604.50" width="6.90" height="122.50" rx="3"/>
<rect x="619.75" y="605.80" width="6.90" height="121.20" rx="3"/>
<rect x="628.04" y="603.80" width="6.90" height="123.20" rx="3"/>
<rect x="636.33" y="592.20" width="6.90" height="134.80" rx="3"/>
<rect x="644.63" y="605.80" width="6.90" height="121.20" rx="3"/>
<rect x="652.92" y="614.00" width="6.90" height="113.00" rx="3"/>
<rect x="661.22" y="614.00" width="6.90" height="113.00" rx="3"/>
<rect x="669.51" y="603.80" width="6.90" height="123.20" rx="3"/>
<rect x="677.81" y="617.00" width="6.90" height="110.00" rx="3"/>
<rect x="686.10" y="616.00" width="6.90" height="111.00" rx="3"/>
<rect x="694.40" y="612.90" width="6.90" height="114.10" rx="3"/>
<rect x="702.69" y="584.40" width="6.90" height="142.60" rx="3"/>
<rect x="710.99" y="575.90" width="6.90" height="151.10" rx="3"/>
<rect x="719.28" y="546.60" width="6.90" height="180.40" rx="3"/>
<rect x="727.58" y="538.70" width="6.90" height="188.30" rx="3"/>
<rect x="735.87" y="483.40" width="6.90" height="243.60" rx="3"/>
<rect x="744.17" y="471.00" width="6.90" height="256.00" rx="3"/>
<rect x="752.47" y="415.70" width="6.90" height="311.30" rx="3"/>
<rect x="760.76" y="372.50" width="6.90" height="354.50" rx="3"/>
<rect x="769.05" y="374.90" width="6.90" height="352.10" rx="3"/>
<rect x="777.35" y="383.80" width="6.90" height="343.20" rx="3"/>
<rect x="785.64" y="391.30" width="6.90" height="335.70" rx="3"/>
<rect x="793.94" y="389.30" width="6.90" height="337.70" rx="3"/>
<rect x="802.24" y="388.10" width="6.90" height="338.90" rx="3"/>
<rect x="810.53" y="392.20" width="6.90" height="334.80" rx="3"/>
<rect x="818.82" y="388.10" width="6.90" height="338.90" rx="3"/>
<rect x="827.12" y="374.90" width="6.90" height="352.10" rx="3"/>
<rect x="835.41" y="423.90" width="6.90" height="303.10" rx="3"/>
<rect x="843.71" y="443.40" width="6.90" height="283.60" rx="3"/>
<rect x="852.00" y="448.60" width="6.90" height="278.40" rx="3"/>
<rect x="860.30" y="441.20" width="6.90" height="285.80" rx="3"/>
<rect x="868.59" y="449.60" width="6.90" height="277.40" rx="3"/>
<rect x="876.89" y="448.20" width="6.90" height="278.80" rx="3"/>
<rect x="885.18" y="449.40" width="6.90" height="277.60" rx="3"/>
<rect x="893.48" y="436.10" width="6.90" height="290.90" rx="3"/>
<rect x="901.77" y="448.20" width="6.90" height="278.80" rx="3"/>
<rect x="910.07" y="448.20" width="6.90" height="278.80" rx="3"/>
<rect x="918.36" y="447.40" width="6.90" height="279.60" rx="3"/>
<rect x="926.66" y="548.30" width="6.90" height="178.70" rx="3"/>
</g>
<g fill="#2a2ad4" opacity=".93">
<path d="M442.95 727.0V600.40q0 -3.2 3.45 -3.2q3.45 0 3.45 3.2V727.0z"/>
<path d="M451.25 727.0V613.90q0 -3.2 3.45 -3.2q3.45 0 3.45 3.2V727.0z"/>
<path d="M459.54 727.0V615.00q0 -3.2 3.45 -3.2q3.45 0 3.45 3.2V727.0z"/>
<path d="M467.83 727.0V603.80q0 -3.2 3.45 -3.2q3.45 0 3.45 3.2V727.0z"/>
<path d="M476.13 727.0V594.20q0 -3.2 3.45 -3.2q3.45 0 3.45 3.2V727.0z"/>
<path d="M484.43 727.0V602.70q0 -3.2 3.45 -3.2q3.45 0 3.45 3.2V727.0z"/>
<path d="M492.72 727.0V611.90q0 -3.2 3.45 -3.2q3.45 0 3.45 3.2V727.0z"/>
<path d="M501.01 727.0V598.30q0 -3.2 3.45 -3.2q3.45 0 3.45 3.2V727.0z"/>
<path d="M509.31 727.0V599.30q0 -3.2 3.45 -3.2q3.45 0 3.45 3.2V727.0z"/>
<path d="M517.60 727.0V607.50q0 -3.2 3.45 -3.2q3.45 0 3.45 3.2V727.0z"/>
<path d="M525.90 727.0V612.90q0 -3.2 3.45 -3.2q3.45 0 3.45 3.2V727.0z"/>
<path d="M534.19 727.0V603.80q0 -3.2 3.45 -3.2q3.45 0 3.45 3.2V727.0z"/>
<path d="M542.49 727.0V613.90q0 -3.2 3.45 -3.2q3.45 0 3.45 3.2V727.0z"/>
<path d="M550.78 727.0V600.30q0 -3.2 3.45 -3.2q3.45 0 3.45 3.2V727.0z"/>
<path d="M559.08 727.0V606.80q0 -3.2 3.45 -3.2q3.45 0 3.45 3.2V727.0z"/>
<path d="M567.37 727.0V592.50q0 -3.2 3.45 -3.2q3.45 0 3.45 3.2V727.0z"/>
<path d="M575.67 727.0V606.80q0 -3.2 3.45 -3.2q3.45 0 3.45 3.2V727.0z"/>
<path d="M583.96 727.0V604.80q0 -3.2 3.45 -3.2q3.45 0 3.45 3.2V727.0z"/>
<path d="M592.26 727.0V606.80q0 -3.2 3.45 -3.2q3.45 0 3.45 3.2V727.0z"/>
<path d="M600.55 727.0V588.10q0 -3.2 3.45 -3.2q3.45 0 3.45 3.2V727.0z"/>
<path d="M608.85 727.0V605.50q0 -3.2 3.45 -3.2q3.45 0 3.45 3.2V727.0z"/>
<path d="M617.14 727.0V606.80q0 -3.2 3.45 -3.2q3.45 0 3.45 3.2V727.0z"/>
<path d="M625.44 727.0V604.80q0 -3.2 3.45 -3.2q3.45 0 3.45 3.2V727.0z"/>
<path d="M633.73 727.0V593.20q0 -3.2 3.45 -3.2q3.45 0 3.45 3.2V727.0z"/>
<path d="M642.03 727.0V606.80q0 -3.2 3.45 -3.2q3.45 0 3.45 3.2V727.0z"/>
<path d="M650.32 727.0V615.00q0 -3.2 3.45 -3.2q3.45 0 3.45 3.2V727.0z"/>
<path d="M658.62 727.0V615.00q0 -3.2 3.45 -3.2q3.45 0 3.45 3.2V727.0z"/>
<path d="M666.91 727.0V604.80q0 -3.2 3.45 -3.2q3.45 0 3.45 3.2V727.0z"/>
<path d="M675.21 727.0V618.00q0 -3.2 3.45 -3.2q3.45 0 3.45 3.2V727.0z"/>
<path d="M683.50 727.0V617.00q0 -3.2 3.45 -3.2q3.45 0 3.45 3.2V727.0z"/>
<path d="M691.80 727.0V613.90q0 -3.2 3.45 -3.2q3.45 0 3.45 3.2V727.0z"/>
<path d="M700.09 727.0V585.40q0 -3.2 3.45 -3.2q3.45 0 3.45 3.2V727.0z"/>
<path d="M708.39 727.0V576.90q0 -3.2 3.45 -3.2q3.45 0 3.45 3.2V727.0z"/>
<path d="M716.68 727.0V547.60q0 -3.2 3.45 -3.2q3.45 0 3.45 3.2V727.0z"/>
<path d="M724.98 727.0V539.70q0 -3.2 3.45 -3.2q3.45 0 3.45 3.2V727.0z"/>
<path d="M733.27 727.0V484.40q0 -3.2 3.45 -3.2q3.45 0 3.45 3.2V727.0z"/>
<path d="M741.57 727.0V472.00q0 -3.2 3.45 -3.2q3.45 0 3.45 3.2V727.0z"/>
<path d="M749.87 727.0V416.70q0 -3.2 3.45 -3.2q3.45 0 3.45 3.2V727.0z"/>
<path d="M758.16 727.0V373.50q0 -3.2 3.45 -3.2q3.45 0 3.45 3.2V727.0z"/>
<path d="M766.45 727.0V375.90q0 -3.2 3.45 -3.2q3.45 0 3.45 3.2V727.0z"/>
<path d="M774.75 727.0V384.80q0 -3.2 3.45 -3.2q3.45 0 3.45 3.2V727.0z"/>
<path d="M783.04 727.0V392.30q0 -3.2 3.45 -3.2q3.45 0 3.45 3.2V727.0z"/>
<path d="M791.34 727.0V390.30q0 -3.2 3.45 -3.2q3.45 0 3.45 3.2V727.0z"/>
<path d="M799.63 727.0V389.10q0 -3.2 3.45 -3.2q3.45 0 3.45 3.2V727.0z"/>
<path d="M807.93 727.0V393.20q0 -3.2 3.45 -3.2q3.45 0 3.45 3.2V727.0z"/>
<path d="M816.22 727.0V389.10q0 -3.2 3.45 -3.2q3.45 0 3.45 3.2V727.0z"/>
<path d="M824.52 727.0V375.90q0 -3.2 3.45 -3.2q3.45 0 3.45 3.2V727.0z"/>
<path d="M832.81 727.0V424.90q0 -3.2 3.45 -3.2q3.45 0 3.45 3.2V727.0z"/>
<path d="M841.11 727.0V444.40q0 -3.2 3.45 -3.2q3.45 0 3.45 3.2V727.0z"/>
<path d="M849.40 727.0V449.60q0 -3.2 3.45 -3.2q3.45 0 3.45 3.2V727.0z"/>
<path d="M857.70 727.0V442.20q0 -3.2 3.45 -3.2q3.45 0 3.45 3.2V727.0z"/>
<path d="M865.99 727.0V450.60q0 -3.2 3.45 -3.2q3.45 0 3.45 3.2V727.0z"/>
<path d="M874.29 727.0V449.20q0 -3.2 3.45 -3.2q3.45 0 3.45 3.2V727.0z"/>
<path d="M882.58 727.0V450.40q0 -3.2 3.45 -3.2q3.45 0 3.45 3.2V727.0z"/>
<path d="M890.88 727.0V437.10q0 -3.2 3.45 -3.2q3.45 0 3.45 3.2V727.0z"/>
<path d="M899.17 727.0V449.20q0 -3.2 3.45 -3.2q3.45 0 3.45 3.2V727.0z"/>
<path d="M907.47 727.0V449.20q0 -3.2 3.45 -3.2q3.45 0 3.45 3.2V727.0z"/>
<path d="M915.76 727.0V448.40q0 -3.2 3.45 -3.2q3.45 0 3.45 3.2V727.0z"/>
<path d="M924.06 727.0V549.30q0 -3.2 3.45 -3.2q3.45 0 3.45 3.2V727.0z"/>
</g>
<g fill="#7c7cec" opacity=".5">
<rect x="444.20" y="599.80" width="2.6" height="127.20" rx="1.4"/>
<rect x="452.50" y="613.30" width="2.6" height="113.70" rx="1.4"/>
<rect x="460.79" y="614.40" width="2.6" height="112.60" rx="1.4"/>
<rect x="469.08" y="603.20" width="2.6" height="123.80" rx="1.4"/>
<rect x="477.38" y="593.60" width="2.6" height="133.40" rx="1.4"/>
<rect x="485.68" y="602.10" width="2.6" height="124.90" rx="1.4"/>
<rect x="493.97" y="611.30" width="2.6" height="115.70" rx="1.4"/>
<rect x="502.26" y="597.70" width="2.6" height="129.30" rx="1.4"/>
<rect x="510.56" y="598.70" width="2.6" height="128.30" rx="1.4"/>
<rect x="518.85" y="606.90" width="2.6" height="120.10" rx="1.4"/>
<rect x="527.15" y="612.30" width="2.6" height="114.70" rx="1.4"/>
<rect x="535.44" y="603.20" width="2.6" height="123.80" rx="1.4"/>
<rect x="543.74" y="613.30" width="2.6" height="113.70" rx="1.4"/>
<rect x="552.03" y="599.70" width="2.6" height="127.30" rx="1.4"/>
<rect x="560.33" y="606.20" width="2.6" height="120.80" rx="1.4"/>
<rect x="568.62" y="591.90" width="2.6" height="135.10" rx="1.4"/>
<rect x="576.92" y="606.20" width="2.6" height="120.80" rx="1.4"/>
<rect x="585.21" y="604.20" width="2.6" height="122.80" rx="1.4"/>
<rect x="593.51" y="606.20" width="2.6" height="120.80" rx="1.4"/>
<rect x="601.80" y="587.50" width="2.6" height="139.50" rx="1.4"/>
<rect x="610.10" y="604.90" width="2.6" height="122.10" rx="1.4"/>
<rect x="618.39" y="606.20" width="2.6" height="120.80" rx="1.4"/>
<rect x="626.69" y="604.20" width="2.6" height="122.80" rx="1.4"/>
<rect x="634.98" y="592.60" width="2.6" height="134.40" rx="1.4"/>
<rect x="643.28" y="606.20" width="2.6" height="120.80" rx="1.4"/>
<rect x="651.57" y="614.40" width="2.6" height="112.60" rx="1.4"/>
<rect x="659.87" y="614.40" width="2.6" height="112.60" rx="1.4"/>
<rect x="668.16" y="604.20" width="2.6" height="122.80" rx="1.4"/>
<rect x="676.46" y="617.40" width="2.6" height="109.60" rx="1.4"/>
<rect x="684.75" y="616.40" width="2.6" height="110.60" rx="1.4"/>
<rect x="693.05" y="613.30" width="2.6" height="113.70" rx="1.4"/>
<rect x="701.34" y="584.80" width="2.6" height="142.20" rx="1.4"/>
<rect x="709.64" y="576.30" width="2.6" height="150.70" rx="1.4"/>
<rect x="717.93" y="547.00" width="2.6" height="180.00" rx="1.4"/>
<rect x="726.23" y="539.10" width="2.6" height="187.90" rx="1.4"/>
<rect x="734.52" y="483.80" width="2.6" height="243.20" rx="1.4"/>
<rect x="742.82" y="471.40" width="2.6" height="255.60" rx="1.4"/>
<rect x="751.12" y="416.10" width="2.6" height="310.90" rx="1.4"/>
<rect x="759.41" y="372.90" width="2.6" height="354.10" rx="1.4"/>
<rect x="767.70" y="375.30" width="2.6" height="351.70" rx="1.4"/>
<rect x="776.00" y="384.20" width="2.6" height="342.80" rx="1.4"/>
<rect x="784.29" y="391.70" width="2.6" height="335.30" rx="1.4"/>
<rect x="792.59" y="389.70" width="2.6" height="337.30" rx="1.4"/>
<rect x="800.88" y="388.50" width="2.6" height="338.50" rx="1.4"/>
<rect x="809.18" y="392.60" width="2.6" height="334.40" rx="1.4"/>
<rect x="817.47" y="388.50" width="2.6" height="338.50" rx="1.4"/>
<rect x="825.77" y="375.30" width="2.6" height="351.70" rx="1.4"/>
<rect x="834.06" y="424.30" width="2.6" height="302.70" rx="1.4"/>
<rect x="842.36" y="443.80" width="2.6" height="283.20" rx="1.4"/>
<rect x="850.65" y="449.00" width="2.6" height="278.00" rx="1.4"/>
<rect x="858.95" y="441.60" width="2.6" height="285.40" rx="1.4"/>
<rect x="867.24" y="450.00" width="2.6" height="277.00" rx="1.4"/>
<rect x="875.54" y="448.60" width="2.6" height="278.40" rx="1.4"/>
<rect x="883.83" y="449.80" width="2.6" height="277.20" rx="1.4"/>
<rect x="892.13" y="436.50" width="2.6" height="290.50" rx="1.4"/>
<rect x="900.42" y="448.60" width="2.6" height="278.40" rx="1.4"/>
<rect x="908.72" y="448.60" width="2.6" height="278.40" rx="1.4"/>
<rect x="917.01" y="447.80" width="2.6" height="279.20" rx="1.4"/>
<rect x="925.31" y="548.70" width="2.6" height="178.30" rx="1.4"/>
</g>
<rect x="445" y="728.0" width="488.5" height="5" fill="url(#ux)"/>
<line x1="441" x2="441" y1="317.5" y2="727.5" stroke="#7a3a0c" stroke-width="2"/>
<line x1="440" x2="1247" y1="727.5" y2="727.5" stroke="#7a3a0c" stroke-width="1.4"/>
<line x1="437" x2="441" y1="727.00" y2="727.00" stroke="#8b4513" stroke-width="1.2"/>
<line x1="437" x2="441" y1="675.88" y2="675.88" stroke="#8b4513" stroke-width="1.2"/>
<line x1="437" x2="441" y1="624.75" y2="624.75" stroke="#8b4513" stroke-width="1.2"/>
<line x1="437" x2="441" y1="573.62" y2="573.62" stroke="#8b4513" stroke-width="1.2"/>
<line x1="437" x2="441" y1="522.50" y2="522.50" stroke="#8b4513" stroke-width="1.2"/>
<line x1="437" x2="441" y1="471.38" y2="471.38" stroke="#8b4513" stroke-width="1.2"/>
<line x1="437" x2="441" y1="420.25" y2="420.25" stroke="#8b4513" stroke-width="1.2"/>
<line x1="437" x2="441" y1="369.12" y2="369.12" stroke="#8b4513" stroke-width="1.2"/>
<line x1="437" x2="441" y1="318.00" y2="318.00" stroke="#8b4513" stroke-width="1.2"/>
<line x1="446.40" x2="446.40" y1="727.0" y2="730.8" stroke="#8b4513" stroke-width="1.2"/>
<line x1="479.58" x2="479.58" y1="727.0" y2="730.8" stroke="#8b4513" stroke-width="1.2"/>
<line x1="512.76" x2="512.76" y1="727.0" y2="730.8" stroke="#8b4513" stroke-width="1.2"/>
<line x1="545.94" x2="545.94" y1="727.0" y2="730.8" stroke="#8b4513" stroke-width="1.2"/>
<line x1="579.12" x2="579.12" y1="727.0" y2="730.8" stroke="#8b4513" stroke-width="1.2"/>
<line x1="612.30" x2="612.30" y1="727.0" y2="730.8" stroke="#8b4513" stroke-width="1.2"/>
<line x1="645.48" x2="645.48" y1="727.0" y2="730.8" stroke="#8b4513" stroke-width="1.2"/>
<line x1="678.66" x2="678.66" y1="727.0" y2="730.8" stroke="#8b4513" stroke-width="1.2"/>
<line x1="711.84" x2="711.84" y1="727.0" y2="730.8" stroke="#8b4513" stroke-width="1.2"/>
<line x1="745.02" x2="745.02" y1="727.0" y2="730.8" stroke="#8b4513" stroke-width="1.2"/>
<line x1="778.20" x2="778.20" y1="727.0" y2="730.8" stroke="#8b4513" stroke-width="1.2"/>
<line x1="811.38" x2="811.38" y1="727.0" y2="730.8" stroke="#8b4513" stroke-width="1.2"/>
<line x1="844.56" x2="844.56" y1="727.0" y2="730.8" stroke="#8b4513" stroke-width="1.2"/>
<line x1="877.74" x2="877.74" y1="727.0" y2="730.8" stroke="#8b4513" stroke-width="1.2"/>
<line x1="910.92" x2="910.92" y1="727.0" y2="730.8" stroke="#8b4513" stroke-width="1.2"/>
<line x1="944.10" x2="944.10" y1="727.0" y2="730.8" stroke="#8b4513" stroke-width="1.2"/>
<line x1="977.28" x2="977.28" y1="727.0" y2="730.8" stroke="#8b4513" stroke-width="1.2"/>
<line x1="1010.46" x2="1010.46" y1="727.0" y2="730.8" stroke="#8b4513" stroke-width="1.2"/>
<line x1="1043.64" x2="1043.64" y1="727.0" y2="730.8" stroke="#8b4513" stroke-width="1.2"/>
<line x1="1076.82" x2="1076.82" y1="727.0" y2="730.8" stroke="#8b4513" stroke-width="1.2"/>
<line x1="1110.00" x2="1110.00" y1="727.0" y2="730.8" stroke="#8b4513" stroke-width="1.2"/>
<line x1="1143.18" x2="1143.18" y1="727.0" y2="730.8" stroke="#8b4513" stroke-width="1.2"/>
<line x1="1176.36" x2="1176.36" y1="727.0" y2="730.8" stroke="#8b4513" stroke-width="1.2"/>
<line x1="1209.54" x2="1209.54" y1="727.0" y2="730.8" stroke="#8b4513" stroke-width="1.2"/>
<line x1="1242.72" x2="1242.72" y1="727.0" y2="730.8" stroke="#8b4513" stroke-width="1.2"/>
</svg>
<div class="t yl" style="left:380px;width:55.8px;top:723.2px">0</div>
<div class="t yl" style="left:380px;width:55.8px;top:672.1px">0,05</div>
<div class="t yl" style="left:380px;width:55.8px;top:621.0px">0,1</div>
<div class="t yl" style="left:380px;width:55.8px;top:569.8px">0,15</div>
<div class="t yl" style="left:380px;width:55.8px;top:518.7px">0,2</div>
<div class="t yl" style="left:380px;width:55.8px;top:467.6px">0,25</div>
<div class="t yl" style="left:380px;width:55.8px;top:416.4px">0,3</div>
<div class="t yl" style="left:380px;width:55.8px;top:365.3px">0,35</div>
<div class="t yl" style="left:380px;width:55.8px;top:314.2px">0,4</div>
<svg class="abs" style="will-change:transform;left:380px;top:720px" width="900" height="60" viewBox="380 720 900 60"><g font-family="Liberation Sans, sans-serif" fill="#1a1a1a" stroke="#1a1a1a" stroke-width=".22" text-anchor="end">
<text font-size="11.6" transform="translate(447.31 742.52) rotate(-40)">00:00</text>
<text font-size="9.9" transform="translate(480.07 741.02) rotate(-40)">01:00</text>
<text font-size="9.9" transform="translate(513.25 741.02) rotate(-40)">02:00</text>
<text font-size="9.9" transform="translate(546.43 741.02) rotate(-40)">03:00</text>
<text font-size="9.9" transform="translate(579.61 741.02) rotate(-40)">04:00</text>
<text font-size="9.9" transform="translate(612.79 741.02) rotate(-40)">05:00</text>
<text font-size="11.6" transform="translate(646.39 742.52) rotate(-40)">06:00</text>
<text font-size="9.9" transform="translate(679.15 741.02) rotate(-40)">07:00</text>
<text font-size="9.9" transform="translate(712.33 741.02) rotate(-40)">08:00</text>
<text font-size="9.9" transform="translate(745.51 741.02) rotate(-40)">09:00</text>
<text font-size="9.9" transform="translate(778.69 741.02) rotate(-40)">10:00</text>
<text font-size="9.9" transform="translate(811.87 741.02) rotate(-40)">11:00</text>
<text font-size="11.6" transform="translate(845.47 742.52) rotate(-40)">12:00</text>
<text font-size="9.9" transform="translate(878.23 741.02) rotate(-40)">13:00</text>
<text font-size="9.9" transform="translate(911.41 741.02) rotate(-40)">14:00</text>
<text font-size="9.9" transform="translate(944.59 741.02) rotate(-40)">15:00</text>
<text font-size="9.9" transform="translate(977.77 741.02) rotate(-40)">16:00</text>
<text font-size="9.9" transform="translate(1010.95 741.02) rotate(-40)">17:00</text>
<text font-size="11.6" transform="translate(1044.55 742.52) rotate(-40)">18:00</text>
<text font-size="9.9" transform="translate(1077.31 741.02) rotate(-40)">19:00</text>
<text font-size="9.9" transform="translate(1110.49 741.02) rotate(-40)">20:00</text>
<text font-size="9.9" transform="translate(1143.67 741.02) rotate(-40)">21:00</text>
<text font-size="9.9" transform="translate(1176.85 741.02) rotate(-40)">22:00</text>
<text font-size="9.9" transform="translate(1210.03 741.02) rotate(-40)">23:00</text>
<text font-size="11.6" transform="translate(1243.63 742.52) rotate(-40)">00:00</text>
</g></svg>
</div>
</div>
</div>
</body>
</html>
